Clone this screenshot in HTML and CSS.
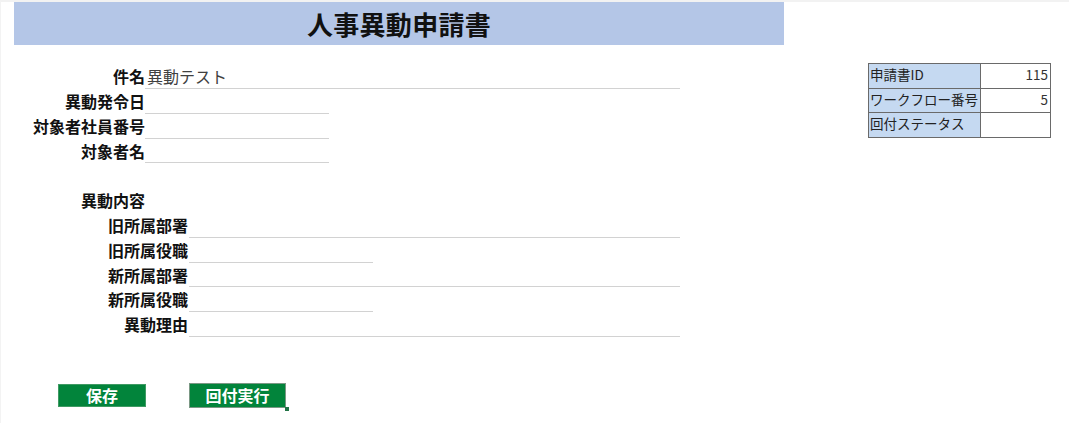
FILE: index.html
```html
<!DOCTYPE html>
<html lang="ja">
<head>
<meta charset="utf-8">
<title>人事異動申請書</title>
<link rel="stylesheet" href="styles.css">
</head>
<body>
<div class="sheet">
  <header class="title-bar"><h1>人事異動申請書</h1></header>
  <div class="content">
    <div class="form">
      <div class="row"><span class="label l1">件名</span><span class="field f1-wide value">異動テスト</span></div>
      <div class="row"><span class="label l1">異動発令日</span><span class="field f1-short"></span></div>
      <div class="row"><span class="label l1">対象者社員番号</span><span class="field f1-short"></span></div>
      <div class="row"><span class="label l1">対象者名</span><span class="field f1-short"></span></div>
      <div class="row"></div>
      <div class="row"><span class="label l1">異動内容</span></div>
      <div class="row"><span class="label l2">旧所属部署</span><span class="field f2-wide"></span></div>
      <div class="row"><span class="label l2">旧所属役職</span><span class="field f2-short"></span></div>
      <div class="row"><span class="label l2">新所属部署</span><span class="field f2-wide"></span></div>
      <div class="row"><span class="label l2">新所属役職</span><span class="field f2-short"></span></div>
      <div class="row"><span class="label l2">異動理由</span><span class="field f2-wide"></span></div>
      <div class="actions">
        <button class="btn btn-save">保存</button>
        <button class="btn btn-send">回付実行</button>
      </div>
    </div>
    <table class="info">
      <tr><th>申請書ID</th><td>115</td></tr>
      <tr><th>ワークフロー番号</th><td>5</td></tr>
      <tr><th>回付ステータス</th><td></td></tr>
    </table>
  </div>
</div>
</body>
</html>
```

FILE: styles.css
```css
html, body {
  margin: 0;
  padding: 0;
  background: #ffffff;
}
body {
  width: 1069px;
  height: 423px;
  box-sizing: border-box;
  border-top: 2px solid #f2f2f2;
  border-left: 1px solid #f3f3f3;
  font-family: "Noto Sans CJK JP", "Noto Sans", sans-serif;
  color: #111;
  overflow: hidden;
}
.sheet {
  padding-left: 13px;
}
.title-bar {
  width: 770px;
  height: 43px;
  background: #b4c6e7;
  display: flex;
  align-items: center;
  justify-content: center;
}
.title-bar h1 {
  margin: 0;
  font-size: 26px;
  line-height: 30px;
  font-weight: 700;
  color: #111;
  letter-spacing: 0.3px;
}
.content {
  display: flex;
  justify-content: space-between;
  align-items: flex-start;
  padding-right: 18px;
}
.form {
  margin-top: 19.2px;
  display: flex;
  flex-direction: column;
}
.row {
  height: 24.8px;
  display: flex;
  align-items: stretch;
}
.label {
  font-size: 16px;
  line-height: 24px;
  padding-top: 0;
  font-weight: 700;
  text-align: right;
  white-space: nowrap;
  box-sizing: border-box;
}
.l1 { width: 131px; }
.l2 { width: 174px; }
.field {
  box-sizing: border-box;
  border-bottom: 1px solid #d2d2d2;
  font-size: 16px;
  line-height: 24px;
  padding-top: 0;
  padding-left: 2px;
}
.l2 + .field { margin-left: 1px; }
.value {
  color: #404040;
  font-weight: 400;
}
.f1-wide { width: 535px; }
.f1-short { width: 184px; }
.f2-wide { width: 491px; }
.f2-short { width: 184px; }

.actions {
  display: flex;
  align-items: flex-start;
  margin-top: 46px;
  padding-left: 44px;
}
.btn {
  font-family: "Noto Sans CJK JP", "Noto Sans", sans-serif;
  font-size: 16px;
  font-weight: 700;
  color: #ffffff;
  background: #02843b;
  border: 1px solid #3f9a63;
  padding: 0;
  margin: 0;
  display: flex;
  align-items: center;
  justify-content: center;
  box-sizing: border-box;
}
.btn-save {
  width: 88px;
  height: 23px;
  margin-top: 1px;
}
.btn-send {
  position: relative;
  width: 97px;
  height: 25px;
  margin-left: 43px;
  border-color: #7a9884;
}
.btn-send::after {
  content: "";
  position: absolute;
  right: -4px;
  bottom: -4px;
  width: 4px;
  height: 4px;
  background: #217346;
}
.info {
  margin-top: 18px;
  border-collapse: collapse;
  font-size: 13.5px;
  line-height: 16px;
}
.info th,
.info td {
  border: 1px solid #6a6a6a;
  height: 24.7px;
  box-sizing: border-box;
  padding: 2px 2px 0 1px;
  vertical-align: top;
  font-weight: 400;
  color: #222;
}
.info th {
  width: 112px;
  background: #c5d9f1;
  text-align: left;
  white-space: nowrap;
}
.info td {
  width: 70px;
  text-align: right;
  color: #333;
}
```
